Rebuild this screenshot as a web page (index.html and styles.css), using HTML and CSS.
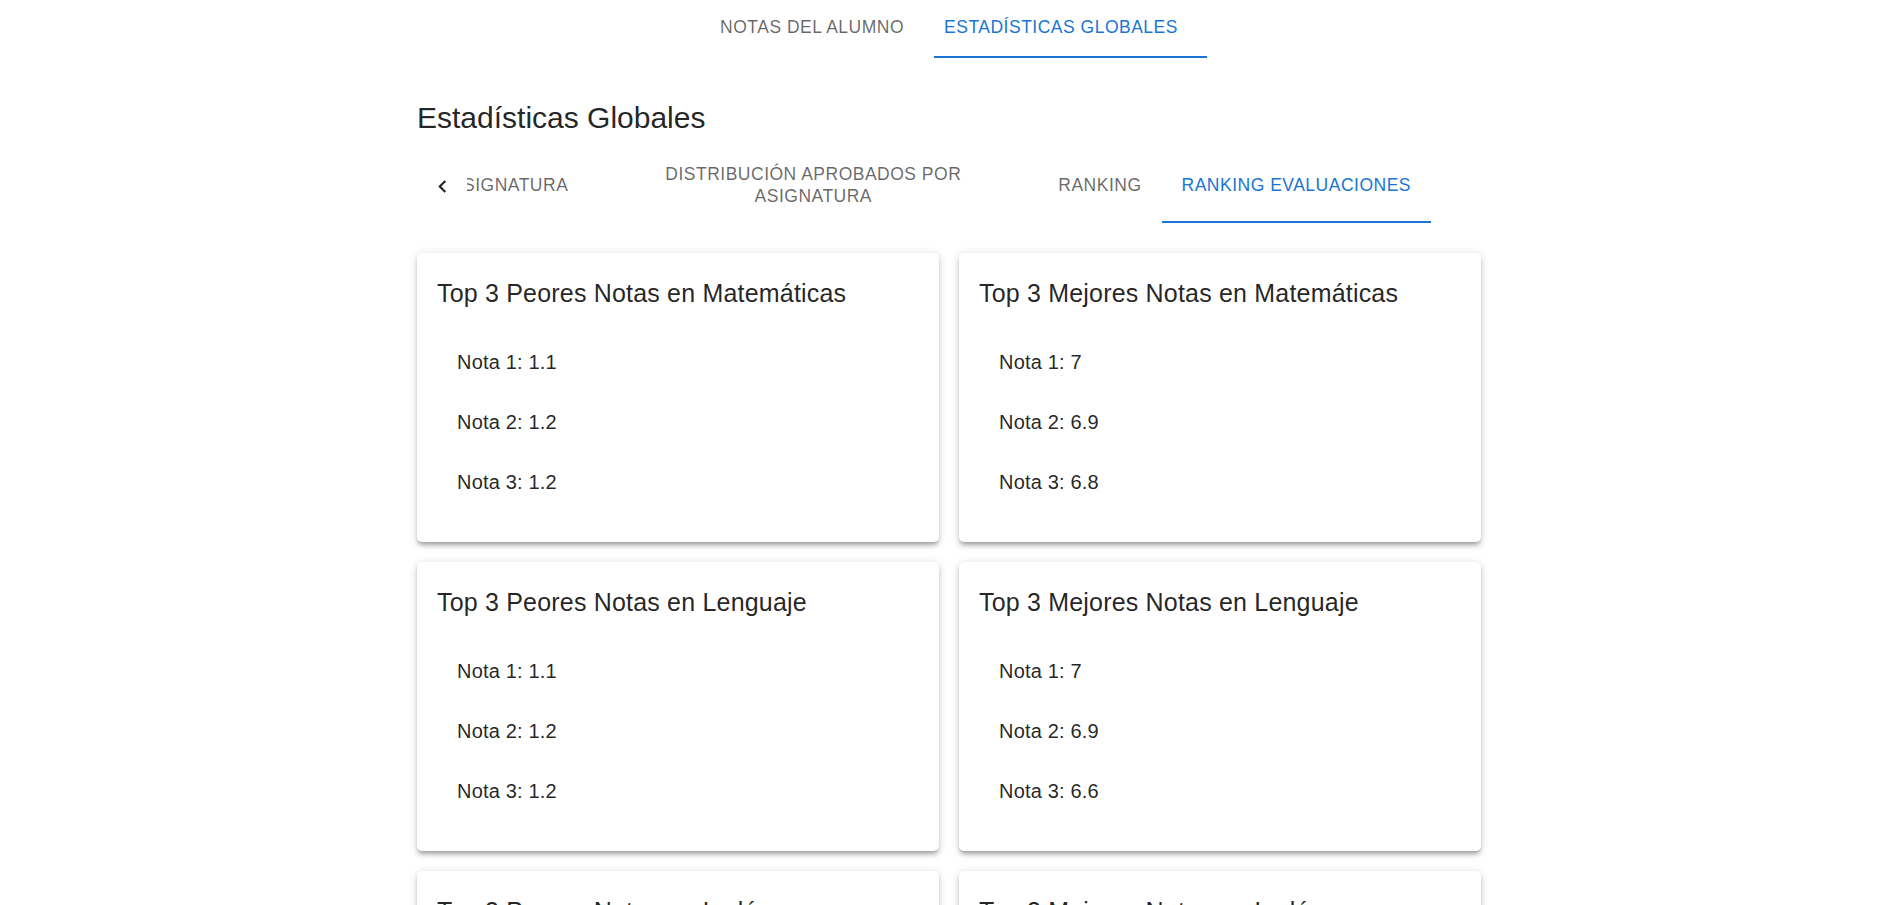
FILE: index.html
```html
<!DOCTYPE html>
<html lang="es">
<head>
<meta charset="utf-8">
<title>Estadísticas Globales</title>
<link rel="stylesheet" href="styles.css">
</head>
<body>
<div class="container">
  <nav class="main-tabs">
    <div class="tab main-tab">NOTAS DEL ALUMNO</div>
    <div class="tab main-tab selected">ESTADÍSTICAS GLOBALES<span class="main-indicator"></span></div>
  </nav>

  <h1 class="page-title">Estadísticas Globales</h1>

  <div class="sub-tabs">
    <button class="scroll-btn" type="button" aria-label="Anterior">
      <svg viewBox="0 0 24 24" width="25" height="25"><path d="M15.41 16.59 10.83 12l4.58-4.59L14 6l-6 6 6 6z"/></svg>
    </button>
    <div class="scroller">
      <div class="tab sub-tab">PROMEDIO POR ASIGNATURA</div>
      <div class="tab sub-tab wrap">DISTRIBUCIÓN APROBADOS POR ASIGNATURA</div>
      <div class="tab sub-tab">RANKING</div>
      <div class="tab sub-tab selected">RANKING EVALUACIONES<span class="sub-indicator"></span></div>
    </div>
    <div class="scroll-btn placeholder"></div>
  </div>

  <div class="grid">
    <section class="card">
      <h2 class="card-title">Top 3 Peores Notas en Matemáticas</h2>
      <ul class="list">
        <li>Nota 1: 1.1</li>
        <li>Nota 2: 1.2</li>
        <li>Nota 3: 1.2</li>
      </ul>
    </section>
    <section class="card">
      <h2 class="card-title">Top 3 Mejores Notas en Matemáticas</h2>
      <ul class="list">
        <li>Nota 1: 7</li>
        <li>Nota 2: 6.9</li>
        <li>Nota 3: 6.8</li>
      </ul>
    </section>
    <section class="card">
      <h2 class="card-title">Top 3 Peores Notas en Lenguaje</h2>
      <ul class="list">
        <li>Nota 1: 1.1</li>
        <li>Nota 2: 1.2</li>
        <li>Nota 3: 1.2</li>
      </ul>
    </section>
    <section class="card">
      <h2 class="card-title">Top 3 Mejores Notas en Lenguaje</h2>
      <ul class="list">
        <li>Nota 1: 7</li>
        <li>Nota 2: 6.9</li>
        <li>Nota 3: 6.6</li>
      </ul>
    </section>
    <section class="card">
      <h2 class="card-title">Top 3 Peores Notas en Inglés</h2>
      <ul class="list">
        <li>Nota 1: 1.1</li>
        <li>Nota 2: 1.3</li>
        <li>Nota 3: 1.4</li>
      </ul>
    </section>
    <section class="card">
      <h2 class="card-title">Top 3 Mejores Notas en Inglés</h2>
      <ul class="list">
        <li>Nota 1: 7</li>
        <li>Nota 2: 6.9</li>
        <li>Nota 3: 6.8</li>
      </ul>
    </section>
  </div>
</div>
</body>
</html>
```

FILE: styles.css
```css
html, body {
  margin: 0;
  padding: 0;
  background: #ffffff;
  overflow: hidden;
}

body {
  font-family: "Liberation Sans", Arial, Helvetica, sans-serif;
  color: rgba(0, 0, 0, 0.87);
}

.container {
  width: 1064px;
  margin-left: calc(50% - 528px);
}

/* ---------- tabs ---------- */
.tab {
  position: relative;
  box-sizing: border-box;
  padding: 15px 20px;
  font-size: 17.5px;
  line-height: 21.875px;
  letter-spacing: 0.5px;
  color: rgba(0, 0, 0, 0.6);
  text-align: center;
  white-space: nowrap;
  flex-shrink: 0;
  display: flex;
  align-items: center;
  justify-content: center;
  min-width: 112px;
}

.tab.selected {
  color: #1976d2;
}

.main-tabs {
  display: flex;
  justify-content: center;
  height: 60px;
}

.main-tab {
  padding: 11px 20px 15px;
}

.main-indicator {
  position: absolute;
  left: 10px;
  bottom: 2px;
  width: 273px;
  height: 2px;
  background: #1976d2;
}

.page-title {
  margin: 38px 0 11px;
  font-size: 30px;
  line-height: 40px;
  font-weight: 400;
  color: rgba(0, 0, 0, 0.87);
}

.sub-tabs {
  display: flex;
  height: 74px;
}

.scroll-btn {
  width: 50px;
  flex-shrink: 0;
  border: 0;
  padding: 0;
  background: transparent;
  display: flex;
  align-items: center;
  justify-content: center;
  color: rgba(0, 0, 0, 0.87);
}

.scroll-btn svg {
  fill: currentColor;
}

.scroller {
  flex: 1;
  display: flex;
  justify-content: flex-end;
  overflow: hidden;
}

.sub-tab {
  height: 74px;
}

.sub-tab.wrap {
  white-space: normal;
  max-width: 450px;
  width: 450px;
}

.sub-indicator {
  position: absolute;
  left: 0;
  right: 0;
  bottom: 0;
  height: 2px;
  background: #1976d2;
}

/* ---------- cards ---------- */
.grid {
  margin-top: 30px;
  display: grid;
  grid-template-columns: 1fr 1fr;
  gap: 20px;
}

.card {
  background: #ffffff;
  border-radius: 5px;
  padding: 20px;
  box-shadow:
    0 3.75px 3.75px -2.5px rgba(0, 0, 0, 0.2),
    0 3.75px 5px 0 rgba(0, 0, 0, 0.14),
    0 1.25px 10px 0 rgba(0, 0, 0, 0.12);
}

.card-title {
  margin: 0 0 8.75px;
  font-size: 25px;
  line-height: 40px;
  font-weight: 400;
  letter-spacing: 0.19px;
  color: rgba(0, 0, 0, 0.87);
}

.list {
  list-style: none;
  margin: 0;
  padding: 10px 0;
}

.list li {
  height: 60px;
  padding: 0 20px;
  display: flex;
  align-items: center;
  font-size: 20px;
  line-height: 30px;
  letter-spacing: 0.19px;
  color: rgba(0, 0, 0, 0.87);
}
```
